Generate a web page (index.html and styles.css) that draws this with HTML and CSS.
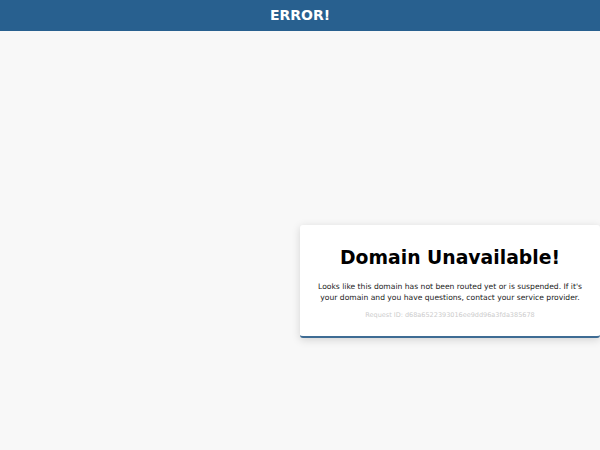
FILE: index.html
```html
<!DOCTYPE html>
<html>
<head>
<meta charset="utf-8">
<link rel="stylesheet" href="styles.css">
</head>
<body>
<header class="bar">ERROR!</header>
<main class="stage">
  <section class="card">
    <h1 class="title">Domain Unavailable!</h1>
    <p class="msg">Looks like this domain has not been routed yet or is suspended. If it's your domain and you have questions, contact your service provider.</p>
    <p class="req">Request ID: d68a6522393016ee9dd96a3fda385678</p>
  </section>
</main>
</body>
</html>
```
FILE: styles.css
```css
html, body { margin: 0; padding: 0; }
body {
  background: #f8f8f8;
  font-family: "DejaVu Sans", sans-serif;
  height: 450px;
  overflow: hidden;
}
.bar {
  height: 31px;
  background: #28608f;
  color: #fff;
  font-weight: bold;
  font-size: 14px;
  line-height: 31px;
  text-align: center;
}
.stage {
  padding-top: 194px;
  padding-left: 300px;
}
.card {
  width: 300px;
  box-sizing: border-box;
  background: #fff;
  border-radius: 3px;
  border-bottom: 2px solid #3e6c94;
  box-shadow: 0 2px 8px rgba(0,0,0,0.15);
  padding: 20px 16px 16px;
  text-align: center;
}
.title {
  margin: 0;
  font-size: 18.8px;
  line-height: 26px;
  font-weight: bold;
  color: #000;
}
.msg {
  margin: 10px 0 0;
  font-size: 7.6px;
  line-height: 11px;
  color: #222;
}
.req {
  margin: 8px 0 0;
  font-size: 6.5px;
  line-height: 9px;
  color: #ccc;
}
```
